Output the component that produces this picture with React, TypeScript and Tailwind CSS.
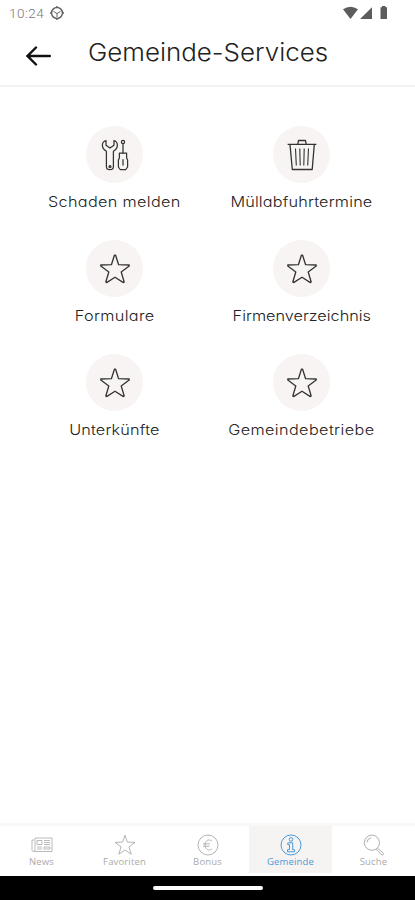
import type { ReactNode } from "react";
import clsx from "clsx";

const StarIcon = () => (
  <svg className="h-8 w-8" viewBox="0 0 32 32" fill="none" stroke="currentColor" strokeWidth="1.3" strokeLinejoin="round">
    <path d="M15.4 2.2H16.6L19.6 11.7 30.2 12V13L22.2 19 25.2 29 24.4 29.6 16 24.2 7.6 29.6 6.8 29 9.8 19 1.8 13V12L12.4 11.7Z" />
  </svg>
);

const ToolsIcon = () => (
  <svg className="h-8 w-8" viewBox="0 0 32 32" fill="none" stroke="currentColor" strokeWidth="1.25" strokeLinejoin="round" strokeLinecap="round">
    <path d="M7 1.5C2.2 3 2 9.4 7.4 12.2V27.5C7.4 31.8 14.4 31.8 14.4 27.5V12.2C19.8 9.4 19.4 3 15 1.5V6.2L11 9 7 6.2Z" />
    <circle cx="11" cy="27.6" r="1" />
    <circle cx="24" cy="3" r="1.6" />
    <path d="M24 4.8V14" />
    <path d="M20.4 14.2H27.6V19L28.6 21V28L26.8 30.5H21.2L19.4 28V21L20.4 19ZM24 20.5V26" />
  </svg>
);

const TrashIcon = () => (
  <svg className="h-8 w-8" viewBox="0 0 32 32" fill="none" stroke="currentColor" strokeWidth="1.3" strokeLinejoin="round">
    <path d="M1.6 5.3H30.4M11.8 5.2 12.5 1.5H19.5L20.2 5.2M4 5.5 6.3 30.5H26.2L28.3 5.5" />
    <path d="M9.5 9.5 10.3 26.5M13.8 9.5 14.2 26.5M18.2 9.5 17.8 26.5M22.5 9.5 21.7 26.5" strokeWidth="1.1" />
  </svg>
);

const NewsIcon = () => (
  <svg className="h-[22px] w-[22px]" viewBox="0 0 22 22" fill="none" stroke="currentColor" strokeWidth="0.8">
    <path d="M4 4H21V17.5H2.5Q1 17.5 1 16V6H3M4 4V16Q4 17.5 2.5 17.5" />
    <path d="M6 6.5H11V10.5H6ZM13 6.5H19M13 8.5H19M13 10.5H19M6 13H11M6 15H11M13 13H19V15H13Z" />
  </svg>
);

const FavoritesIcon = () => (
  <svg className="h-[22px] w-[22px]" viewBox="0 0 22 22" fill="none" stroke="currentColor" strokeWidth="0.9" strokeLinejoin="round">
    <path d="M11 1.2 13.3 8.1 21 8.4 15 12.9 17.2 20.2 11 16 4.8 20.2 7 12.9 1 8.4 8.7 8.1Z" />
  </svg>
);

const BonusIcon = () => (
  <svg className="h-[22px] w-[22px]" viewBox="0 0 22 22" fill="none" stroke="currentColor" strokeWidth="0.9">
    <circle cx="11" cy="11" r="10" />
    <path d="M15 7.2C11.8 4.3 8 6.8 8 11S11.8 17.7 15 14.8M6 9.8H13M6 12.2H12.5" />
  </svg>
);

const InfoIcon = () => (
  <svg className="h-[22px] w-[22px]" viewBox="0 0 22 22" fill="none" stroke="currentColor" strokeWidth="1">
    <circle cx="11" cy="11" r="10" />
    <circle cx="11" cy="5.5" r="1.8" />
    <path d="M7.8 8.8H12.7V15.7H14.5V17.8H7.5V15.7H9.5V10.7H7.8Z" />
  </svg>
);

const SearchIcon = () => (
  <svg className="h-[22px] w-[22px]" viewBox="0 0 22 22" fill="none" stroke="currentColor" strokeWidth="0.95">
    <circle cx="8.9" cy="8.7" r="7.6" />
    <path d="M4 8.5Q4.2 4.4 8.3 3.8M14.4 14 20.7 19.5Q20.5 21.2 18.8 21L13.2 15.2" />
  </svg>
);

const services: { title: string; icon: ReactNode; tracking: string }[] = [
  { title: "Schaden melden", icon: <ToolsIcon />, tracking: "tracking-[0.3px]" },
  { title: "Müllabfuhrtermine", icon: <TrashIcon />, tracking: "tracking-[0.15px]" },
  { title: "Formulare", icon: <StarIcon />, tracking: "tracking-[0.3px]" },
  { title: "Firmenverzeichnis", icon: <StarIcon />, tracking: "tracking-[0px]" },
  { title: "Unterkünfte", icon: <StarIcon />, tracking: "tracking-[0.15px]" },
  { title: "Gemeindebetriebe", icon: <StarIcon />, tracking: "tracking-[0.35px]" },
];

const tabs: { title: string; icon: ReactNode; active?: boolean }[] = [
  { title: "News", icon: <NewsIcon /> },
  { title: "Favoriten", icon: <FavoritesIcon /> },
  { title: "Bonus", icon: <BonusIcon /> },
  { title: "Gemeinde", icon: <InfoIcon />, active: true },
  { title: "Suche", icon: <SearchIcon /> },
];

const StatusBar = () => (
  <div className="flex h-[26px] items-center pl-[9px] pr-[26px] text-[#777]">
    <span className="font-['Roboto',sans-serif] text-[13.5px] tracking-[0.5px]">10:24</span>
    <svg className="ml-[6px] h-[14px] w-[14px]" viewBox="0 0 14 14" fill="none" stroke="#666" strokeWidth="1.5">
      <circle cx="7" cy="7" r="5.5" />
      <path d="M3.5 5.5 7 7.5 10.5 5.5M7 7.5V11" strokeWidth="1" />
      <path d="M7 0V2M7 12V14M0 7H2M12 7H14" />
    </svg>
    <svg className="ml-auto h-[14px] w-[46px]" viewBox="0 0 46 14" fill="#5c5c5c">
      <path d="M0 3.3Q7.5-2 15 3.3L7.5 13ZM17 13 29 1.2V13ZM37.5 1.3H39V0H42.5V1.3H44V13H37.5Z" />
    </svg>
  </div>
);

export default function App() {
  return (
    <div className="flex h-[900px] w-[415px] flex-col overflow-hidden bg-white font-['Inter',sans-serif] font-light text-[#222]">
      <StatusBar />
      <header className="flex h-[61px] items-center border-b-2 border-[#f2f2f2] pl-[26px]">
        <svg className="h-5 w-[25px] shrink-0" viewBox="0 0 25 20" fill="none" stroke="#111" strokeWidth="2.4" strokeLinecap="round">
          <path d="M23.8 10H2M10 1.5 1.5 10 10 18.5" />
        </svg>
        <h1 className="-mt-[5px] ml-[37px] origin-left scale-x-[1.08] whitespace-nowrap text-[24px] leading-8 [font-feature-settings:'cv11']">
          Gemeinde-Services
        </h1>
      </header>

      <main className="grid flex-1 auto-rows-[114px] grid-cols-2 pt-[39px] pr-[20px] pl-[21px]">
        {services.map((service) => (
          <div key={service.title} className="flex flex-col items-center">
            <div className="flex h-[57px] w-[57px] items-center justify-center rounded-full bg-[#f8f4f3] text-[#333]">
              {service.icon}
            </div>
            <span
              className={clsx(
                "mt-[9px] scale-x-[1.12] whitespace-nowrap text-[14.5px] leading-5 [font-feature-settings:'cv11']",
                service.tracking
              )}
            >
              {service.title}
            </span>
          </div>
        ))}
      </main>

      <nav className="grid h-[53px] grid-cols-5 border-t-[3px] border-[#f8f8f8] pb-[3px] font-['Open_Sans',sans-serif] font-normal">
        {tabs.map((tab) => (
          <div
            key={tab.title}
            className={clsx(
              "flex flex-col items-center pt-[8px]",
              tab.active ? "bg-[#f6f3f3] text-[#4a9bd8]" : "text-[#aaa]"
            )}
          >
            {tab.icon}
            <span className="text-[9.5px] leading-3 tracking-[0.15px]">{tab.title}</span>
          </div>
        ))}
      </nav>
      <div className="flex h-6 items-center justify-center bg-black">
        <div className="h-1 w-[110px] rounded-full bg-white" />
      </div>
    </div>
  );
}
